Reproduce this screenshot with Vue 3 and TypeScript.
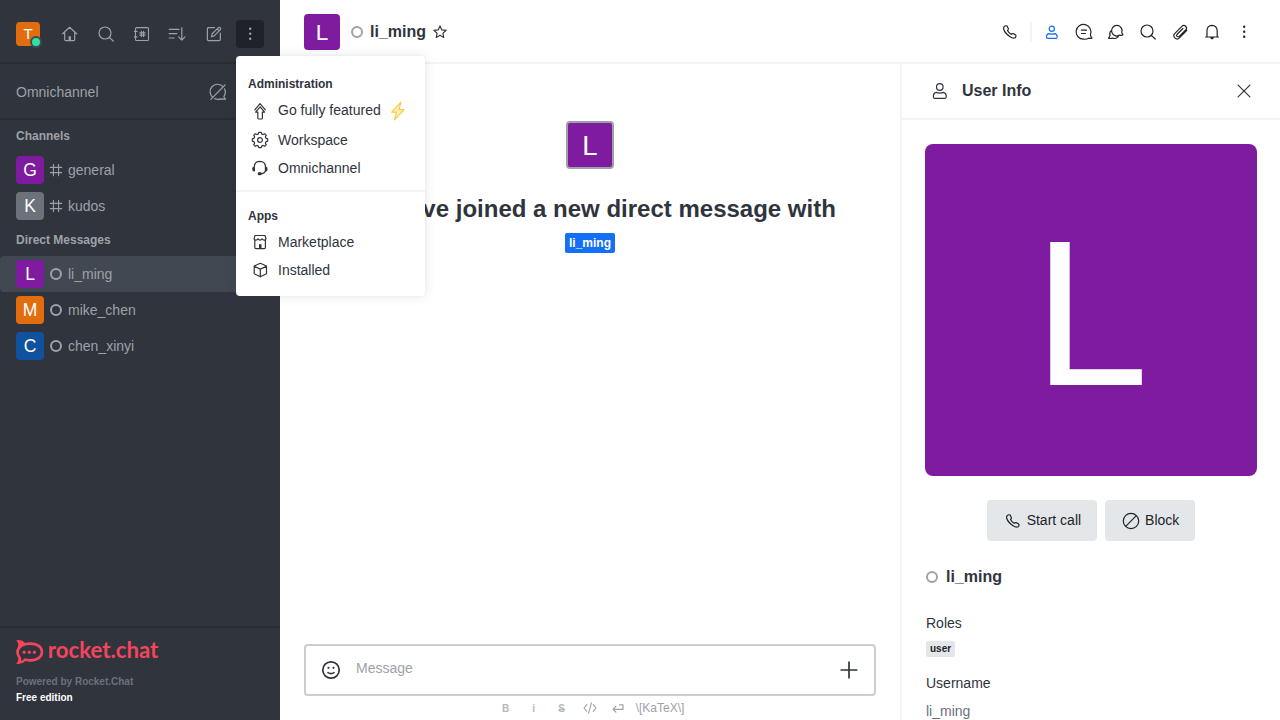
<script setup lang="ts">
import { defineComponent, h } from 'vue'

interface Room {
  name: string
  color: string
  kind: 'channel' | 'direct'
  active?: boolean
}
interface RoomGroup {
  title: string
  rooms: Room[]
}

const groups: RoomGroup[] = [
  {
    title: 'Channels',
    rooms: [
      { name: 'general', color: '#7f1b9f', kind: 'channel' },
      { name: 'kudos', color: '#6c727a', kind: 'channel' },
    ],
  },
  {
    title: 'Direct Messages',
    rooms: [
      { name: 'li_ming', color: '#7f1b9f', kind: 'direct', active: true },
      { name: 'mike_chen', color: '#e26d0e', kind: 'direct' },
      { name: 'chen_xinyi', color: '#10529e', kind: 'direct' },
    ],
  },
]

// All glyphs are drawn on a 20x20 grid; "d" is stroked, "f" is filled.
const icons: Record<string, { d?: string; f?: string; w?: number }> = {
  home: { d: 'M2.6 9.8 9.6 3.3 16.7 9.8M4.7 8.2V15.6Q4.7 16.7 5.8 16.7H13.6Q14.7 16.7 14.7 15.6V8.2', f: 'M8.5 12.2h2.4v4.6H8.5z' },
  search: { d: 'M15 9A6 6 0 1 1 3 9A6 6 0 0 1 15 9M13.4 13.4 17.2 17' },
  directory: { d: 'M4.6 3.6H15.4Q16.5 3.6 16.5 4.7V15.4Q16.5 16.5 15.4 16.5H4.6Q3.5 16.5 3.5 15.4V4.7Q3.5 3.6 4.6 3.6M2.4 7.4H5M2.4 12.9H5M9.4 7.4V12.6M11.5 7.4V12.6M7.8 8.9H13.1M7.8 11.1H13.1', w: 1.1 },
  sort: { d: 'M1.2 5.3H11M1.2 9.7H8.8M1.2 14H6.2M13.8 3.6V16M10.6 12.9 13.8 16.1 17 12.9' },
  edit: { d: 'M10.5 3.6H4.5Q3.4 3.6 3.4 4.7V15.5Q3.4 16.6 4.5 16.6H15.2Q16.3 16.6 16.3 15.5V9.2M7.4 12.8 8.2 9.8 14.5 3.6Q15.5 3 16.3 3.8Q17.1 4.6 16.4 5.6L10.2 11.9ZM13.3 4.8 15.2 6.7' },
  kebab: { f: 'M11.4 4.8a1.2 1.2 0 1 1-2.4 0a1.2 1.2 0 1 1 2.4 0M11.4 9.8a1.2 1.2 0 1 1-2.4 0a1.2 1.2 0 1 1 2.4 0M11.4 14.8a1.2 1.2 0 1 1-2.4 0a1.2 1.2 0 1 1 2.4 0' },
  omniOff: { d: 'M4.6 15.2A7.4 7.4 0 0 1 14.4 4.1M6.7 16.6A8 8 0 0 0 12.7 16.9L17.6 17.2Q16.2 16.2 15.9 14.4A7.4 7.4 0 0 0 16.5 6.8M2.8 17.4 17 3' },
  hash: { d: 'M7.4 4.3V15.7M12.6 4.3V15.7M4.3 7.4H15.7M4.3 12.6H15.7', w: 1.1 },
  star: { d: 'M10 3.9 11.8 7.9 16.1 8.4 12.9 11.2 13.8 15.5 10 13.3 6.2 15.5 7.1 11.2 3.9 8.4 8.2 7.9Z', w: 1.15 },
  phone: { d: 'M4.2 4.6Q5.6 3.2 7.1 4.1L8.4 6.7Q8.6 7.3 7.5 8.5Q8.7 10.8 11.2 12.3Q12.4 11.3 13.1 11.6L15.7 13.1Q16.6 14.2 15.2 15.8Q13 16.8 9.7 14.4Q4.9 11.1 3.7 7.2Q3.3 5.8 4.2 4.6Z' },
  user: { d: 'M12.4 6.8A2.6 2.6 0 1 1 7.2 6.8A2.6 2.6 0 0 1 12.4 6.8M6.7 11.6Q8.2 12.1 9.8 12.1T12.9 11.6Q15.3 12.4 15.1 15.2Q15.1 16.3 14 16.3H5.6Q4.5 16.3 4.5 15.2Q4.3 12.4 6.7 11.6Z' },
  person: { d: 'M13.1 6A3.3 3.3 0 1 1 6.5 6A3.3 3.3 0 0 1 13.1 6M6.1 11.4Q7.9 12.1 9.8 12.1T13.5 11.4Q16.5 12.3 16.2 16Q16.1 17.4 14.7 17.4H4.9Q3.5 17.4 3.4 16Q3.1 12.3 6.1 11.4Z' },
  thread: { d: 'M16.4 12.5Q16.6 14.8 18 15.9Q16.8 16.8 14.7 16.2Q12.4 17.5 9.6 17.2A7.4 7.4 0 1 1 16.4 12.5M7.5 8.2H12.5M7.5 11.5H11.5' },
  discussion: { d: 'M15.8 10.6Q16 11.8 17 12.7Q15.6 13.7 13.8 13.1A5.3 5.3 0 1 1 15.8 10.6M5.5 8.4Q3.2 10.2 4 13.3Q3.6 15.3 2.5 16.2Q4.6 16.9 6.4 16Q10 17.5 12.2 14.6' },
  clip: { d: 'M16.8 8.4 9.5 15.9A3.2 3.2 0 0 1 4.9 11.3L11.9 4.3A2.65 2.65 0 0 1 15.7 8L9 14.6A1.5 1.5 0 0 1 6.9 12.5L12.9 6.5', w: 1.15 },
  bell: { d: 'M3.5 15H16.5M5 15V8.8Q5.1 3.5 9.8 3.3Q14.9 3.4 15.2 8.8V15', f: 'M8.3 15h3.5q-.1 2.4-1.75 2.4T8.3 15' },
  close: { d: 'M4.1 4.1 15.9 15.9M15.9 4.1 4.1 15.9' },
  block: { d: 'M17.7 10A7.7 7.7 0 1 1 2.3 10A7.7 7.7 0 0 1 17.7 10M4.7 15.3 15.3 4.7' },
  upgrade: { d: 'M4.8 8.8 10 2.6 15.3 8.8M10.1 5.8 14.6 11.1H12.4V16.9Q12.4 18 11.4 18H8.9Q7.8 18 7.8 16.9V11.1H5.6Z' },
  gear: { d: 'M8.3 4 8.8 2.3H11.2L11.7 4 13.1 4.6 14.7 3.7 16.3 5.3 15.4 6.9 16 8.3 17.7 8.8V11.2L16 11.7 15.4 13.1 16.3 14.7 14.7 16.3 13.1 15.4 11.7 16 11.2 17.7H8.8L8.3 16 6.9 15.4 5.3 16.3 3.7 14.7 4.6 13.1 4 11.7 2.3 11.2V8.8L4 8.3 4.6 6.9 3.7 5.3 5.3 3.7 6.9 4.6ZM12.4 10A2.4 2.4 0 1 1 7.6 10A2.4 2.4 0 0 1 12.4 10' },
  headset: { d: 'M4.3 9Q4.3 3.4 9.9 3.3Q15.5 3.4 15.5 9M15.5 13Q14.8 15 12 15.7', f: 'M2.6 9.2Q3.6 8.4 5 9.3V13.3Q3 13.7 2.4 12.2Q2 10.7 2.6 9.2M17.2 9.2Q16.2 8.4 14.8 9.3V13.3Q16.8 13.7 17.4 12.2Q17.8 10.7 17.2 9.2M7.6 15.7q0-1.6 2.2-1.6t2.2 1.6t-2.2 1.6t-2.2-1.6' },
  store: { d: 'M5 3.5H15L16 6.7Q15.7 8.2 14.2 8.2Q12.9 8.2 12.1 6.8Q11.4 8.2 10.1 8.2T8.1 6.8Q7.2 8.2 5.9 8.2T4.1 6.7ZM4.8 8.4V15.5Q4.8 16.6 5.9 16.6H14.3Q15.4 16.6 15.4 15.5V8.4', f: 'M9 12.2h2.5v4.4H9z' },
  cube: { d: 'M10.3 3.3 16.5 6V13.8L10.3 16.8 4.2 13.8V6ZM4.2 6.2 10.3 9.1 16.5 6.2M10.3 9.1V16.8' },
  smile: { d: 'M18.2 10A8.2 8.2 0 1 1 1.8 10A8.2 8.2 0 0 1 18.2 10M7 12.6Q10 14.6 13 12.6', f: 'M8.6 7.8a1.1 1.1 0 1 1-2.2 0a1.1 1.1 0 1 1 2.2 0M13.6 7.8a1.1 1.1 0 1 1-2.2 0a1.1 1.1 0 1 1 2.2 0', w: 1.7 },
  plus: { d: 'M10 2.2V17.8M2.2 10H17.8', w: 1.7 },
  code: { d: 'M6.8 6.7 4 10 6.8 13.3M13.2 6.7 16 10 13.2 13.3M11.4 4.8 8.6 15.2', w: 1.1 },
  enter: { d: 'M11.5 6.8H15V11.3H5M7.9 8.4 5 11.3 7.9 14.2', w: 1.2 },
}

const Icon = defineComponent({
  props: { name: { type: String, required: true } },
  setup(props) {
    return () => {
      const g = icons[props.name]
      return h('svg', { width: 20, height: 20, viewBox: '0 0 20 20', fill: 'none', style: { flex: 'none', display: 'block' } }, [
        g.d ? h('path', { d: g.d, stroke: 'currentColor', 'stroke-width': g.w ?? 1.2, 'stroke-linejoin': 'round', 'stroke-linecap': 'round' }) : null,
        g.f ? h('path', { d: g.f, fill: 'currentColor' }) : null,
      ])
    }
  },
})

const Avatar = defineComponent({
  props: {
    letter: { type: String, required: true },
    color: { type: String, required: true },
    size: { type: Number, required: true },
    radius: { type: Number, default: 4 },
  },
  setup(props) {
    return () =>
      h('svg', {
        width: props.size, height: props.size, viewBox: '0 0 200 200',
        style: { background: props.color, borderRadius: `${props.radius}px`, flex: 'none', display: 'block' },
      }, [
        h('text', { x: 100, y: 145, 'text-anchor': 'middle', fill: '#fff', 'font-size': 125, 'font-family': '"Liberation Sans", Arial, sans-serif' }, props.letter),
      ])
  },
})

const sidebarTools = ['home', 'search', 'directory', 'sort', 'edit', 'kebab']
const roomTools = ['user', 'thread', 'discussion', 'search', 'clip', 'bell', 'kebab']
const adminItems = [
  { label: 'Go fully featured', icon: 'upgrade', bolt: true },
  { label: 'Workspace', icon: 'gear', bolt: false },
  { label: 'Omnichannel', icon: 'headset', bolt: false },
]
const appItems = [
  { label: 'Marketplace', icon: 'store' },
  { label: 'Installed', icon: 'cube' },
]
</script>

<template>
  <div class="app">
    <aside class="sidebar">
      <header class="side-top">
        <div class="me">
          <Avatar letter="T" color="#e26d0e" :size="24" />
          <span class="online"></span>
        </div>
        <nav class="side-tools">
          <button v-for="t in sidebarTools" :key="t" class="tool" :class="{ pressed: t === 'kebab' }"><Icon :name="t" /></button>
        </nav>
      </header>
      <div class="omni"><span>Omnichannel</span><Icon name="omniOff" /></div>
      <div class="rooms">
        <section v-for="g in groups" :key="g.title">
          <h3 class="group-title">{{ g.title }}</h3>
          <a v-for="r in g.rooms" :key="r.name" class="room" :class="{ active: r.active }">
            <Avatar :letter="r.name[0].toUpperCase()" :color="r.color" :size="28" />
            <span class="room-icon">
              <Icon v-if="r.kind === 'channel'" name="hash" />
              <i v-else class="ring"></i>
            </span>
            <span>{{ r.name }}</span>
          </a>
        </section>
      </div>
      <footer class="side-foot">
        <svg class="logo" width="144" height="24" viewBox="0 0 144 24">
          <path d="M.2.3Q6-.6 9.3 3Q14.5 1.5 20 3.1Q27.2 5.4 27.2 12Q27.2 18.4 20.3 20.8Q14.6 22.4 9.4 21Q5.8 24.8.2 23.8Q3.2 20.4 1.9 17.2Q-1.5 12 1.9 6.9Q3.1 3.5.2.3Z" fill="#f5455c" />
          <path d="M14 5.1Q24.4 5.4 24.7 12Q24.2 18.7 14 19Q11 19 8.7 18.2Q7.1 20.2 4.8 21Q5.9 18.5 4.5 16.4Q1.5 12.7 4 8.9Q6.7 5.2 14 5.1Z" fill="#2f343d" />
          <circle cx="8.2" cy="12.2" r="1.6" fill="#f5455c" />
          <circle cx="13.3" cy="12.2" r="1.6" fill="#f5455c" />
          <circle cx="18.4" cy="12.2" r="1.6" fill="#f5455c" />
          <text x="31.8" y="18.2" textLength="110.5" lengthAdjust="spacingAndGlyphs" class="wordmark">rocket.chat</text>
        </svg>
        <div class="powered">Powered by Rocket.Chat</div>
        <div class="edition">Free edition</div>
      </footer>
    </aside>

    <div class="main">
      <header class="room-head">
        <Avatar letter="L" color="#7f1b9f" :size="36" />
        <i class="ring head-ring"></i>
        <h1>li_ming</h1>
        <Icon name="star" />
        <div class="room-tools">
          <button class="tool"><Icon name="phone" /></button>
          <span class="bar"></span>
          <button v-for="t in roomTools" :key="t" class="tool" :class="{ selected: t === 'user' }"><Icon :name="t" /></button>
        </div>
      </header>

      <div class="body">
        <main class="chat">
          <div class="intro">
            <div class="intro-avatar"><Avatar letter="L" color="#7f1b9f" :size="44" :radius="2" /></div>
            <h2>You have joined a new direct message with</h2>
            <span class="mention">li_ming</span>
          </div>
          <div class="composer">
            <Icon name="smile" />
            <span class="placeholder">Message</span>
            <Icon name="plus" />
          </div>
          <div class="formats">
            <span class="fmt bold">B</span>
            <span class="fmt bold">i</span>
            <span class="fmt bold strike">S</span>
            <span class="fmt"><Icon name="code" /></span>
            <span class="fmt"><Icon name="enter" /></span>
            <span class="katex">\[KaTeX\]</span>
          </div>
        </main>

        <aside class="panel">
          <header class="panel-head">
            <Icon name="person" />
            <h2>User Info</h2>
            <Icon name="close" />
          </header>
          <div class="panel-body">
            <Avatar letter="L" color="#7f1b9f" :size="332" :radius="8" />
            <div class="actions">
              <button class="action"><Icon name="phone" /><span>Start call</span></button>
              <button class="action"><Icon name="block" /><span>Block</span></button>
            </div>
            <div class="info">
              <div class="who"><i class="ring"></i><strong>li_ming</strong></div>
              <div class="label">Roles</div>
              <span class="role">user</span>
              <div class="label second">Username</div>
              <div class="value">li_ming</div>
            </div>
          </div>
        </aside>
      </div>
    </div>

    <div class="menu">
      <div class="menu-title">Administration</div>
      <div v-for="m in adminItems" :key="m.label" class="item" :class="{ featured: m.bolt }">
        <Icon :name="m.icon" />
        <span>{{ m.label }}</span>
        <svg v-if="m.bolt" class="bolt" width="16" height="20" viewBox="0 0 16 20">
          <path d="M12 1.1 2.7 11.2H7.5L5.6 18.9 15 8.7H10Z" fill="#fff0bd" stroke="#ffc94a" stroke-width="1.2" stroke-linejoin="round" />
        </svg>
      </div>
      <hr />
      <div class="menu-title">Apps</div>
      <div v-for="m in appItems" :key="m.label" class="item"><Icon :name="m.icon" /><span>{{ m.label }}</span></div>
    </div>
  </div>
</template>

<style>
body { margin: 0; overflow: hidden; }
</style>

<style scoped>
.app { position: relative; display: flex; width: 1280px; height: 720px; overflow: hidden; background: #fff; color: #2f343d; font: 14px/20px "Liberation Sans", Arial, sans-serif; }
.app * { box-sizing: border-box; }
button { border: 0; padding: 0; margin: 0; background: none; color: inherit; font: inherit; }
h1, h2, h3 { margin: 0; }

.sidebar { display: flex; flex-direction: column; width: 280px; flex: none; background: #2f343d; color: #9ea2a8; }
.side-top { display: flex; align-items: center; justify-content: space-between; height: 64px; padding: 6px 16px 0; border-bottom: 2px solid #282c34; }
.me { position: relative; }
.online { position: absolute; right: -2px; bottom: -2px; width: 12px; height: 12px; border-radius: 50%; border: 2px solid #414852; background: #2de0a5; }
.side-tools { display: flex; gap: 8px; }
.tool { display: flex; align-items: center; justify-content: center; width: 28px; height: 28px; border-radius: 4px; }
.pressed { background: #1f2329; }
.omni { display: flex; align-items: center; justify-content: space-between; height: 56px; padding: 2px 52px 0 16px; border-bottom: 2px solid #282c34; }
.rooms { flex: 1; }
.group-title { height: 32px; padding: 0 16px; font-size: 12px; line-height: 32px; }
.room { display: flex; align-items: center; height: 36px; padding: 0 16px; }
.active { background: #414852; border-radius: 4px 0 0 4px; }
.room-icon { display: flex; justify-content: center; width: 24px; }
.ring { display: block; flex: none; width: 12px; height: 12px; border: 2px solid #9ea2a8; border-radius: 50%; }
.side-foot { height: 94px; padding: 12px 16px 0; border-top: 2px solid #282c34; font-size: 10px; line-height: 16px; font-weight: 700; }
.logo { display: block; margin-bottom: 10px; overflow: visible; }
.wordmark { font: 700 22px Lato, sans-serif; fill: #f5455c; }
.powered { color: #6c727a; }
.edition { color: #fff; }

.main { display: flex; flex-direction: column; width: 1000px; }
.room-head { display: flex; align-items: center; height: 64px; padding: 2px 22px 0 24px; border-bottom: 2px solid #f2f3f5; }
.head-ring { margin: 0 7px 0 11px; }
.room-head h1 { font-size: 16px; line-height: 24px; margin-right: 4px; }
.room-tools { display: flex; align-items: center; gap: 4px; margin-left: auto; color: #1f2329; }
.bar { width: 2px; height: 20px; margin: 0 2px; background: #f2f3f5; }
.selected { color: #156ff5; }
.body { display: flex; flex: 1; min-height: 0; }
.chat { display: flex; flex-direction: column; width: 620px; padding: 0 24px; }
.intro { display: flex; flex: 1; flex-direction: column; align-items: center; padding-top: 57px; }
.intro-avatar { border: 2px solid #9ea2a8; border-radius: 4px; background: #9ea2a8; }
.intro h2 { margin: 24px 0 8px; font-size: 24px; line-height: 32px; white-space: nowrap; }
.mention { padding: 0 4px; border-radius: 2px; background: #156ff5; color: #fff; font-size: 12px; line-height: 20px; font-weight: 700; }
.composer { display: flex; align-items: center; height: 52px; flex: none; padding: 0 15px; border: 2px solid #cbced1; border-radius: 4px; }
.placeholder { flex: 1; padding-left: 15px; margin-top: -4px; color: #9ea2a8; }
.formats { display: flex; align-items: center; justify-content: center; height: 24px; padding-right: 4px; color: #9ea2a8; font-size: 12px; }
.fmt { display: flex; align-items: center; justify-content: center; width: 28px; height: 24px; }
.bold { padding-top: 2px; font-weight: 700; font-size: 10px; color: #b4b7bb; }
.strike { text-decoration: line-through; }
.katex { margin-left: 4px; }

.panel { width: 380px; border-left: 2px solid #f2f3f5; }
.panel-head { display: flex; align-items: center; height: 56px; padding: 0 26px 0 28px; border-bottom: 2px solid #f2f3f5; }
.panel-head h2 { flex: 1; margin-left: 12px; font-size: 16px; line-height: 24px; }
.panel-body { padding: 24px 23px; }
.actions { display: flex; justify-content: center; gap: 8px; margin: 24px 0; }
.action { display: flex; align-items: center; gap: 4px; height: 41px; padding: 0 16px; border-radius: 4px; background: #e4e7ea; color: #1f2329; }
.action span { margin-top: -2px; }
.info { padding-left: 1px; }
.who { display: flex; align-items: center; gap: 8px; height: 24px; font-size: 16px; }
.label { margin-top: 24px; }
.role { display: block; width: max-content; margin-top: 8px; padding: 0 4px; border-radius: 2px; background: #e4e7ea; color: #1f2329; font-size: 10px; line-height: 16px; font-weight: 700; }
.second { margin-top: 16px; }
.value { margin-top: 8px; color: #6c727a; }

.menu { position: absolute; left: 236px; top: 56px; width: 189px; height: 240px; padding: 12px 0; border-radius: 4px; background: #fff; box-shadow: 0 0 2px rgba(47, 52, 61, .08), 0 0 12px rgba(47, 52, 61, .12); }
.menu-title { padding: 8px 12px 4px; font-size: 12px; line-height: 16px; font-weight: 700; }
.item { display: flex; align-items: center; height: 28px; padding: 0 14px; gap: 8px; }
.featured { height: 30px; }
.featured span { margin-top: -2px; }
.menu hr { height: 2px; margin: 8px 0; border: 0; background: #f2f3f5; }
</style>
